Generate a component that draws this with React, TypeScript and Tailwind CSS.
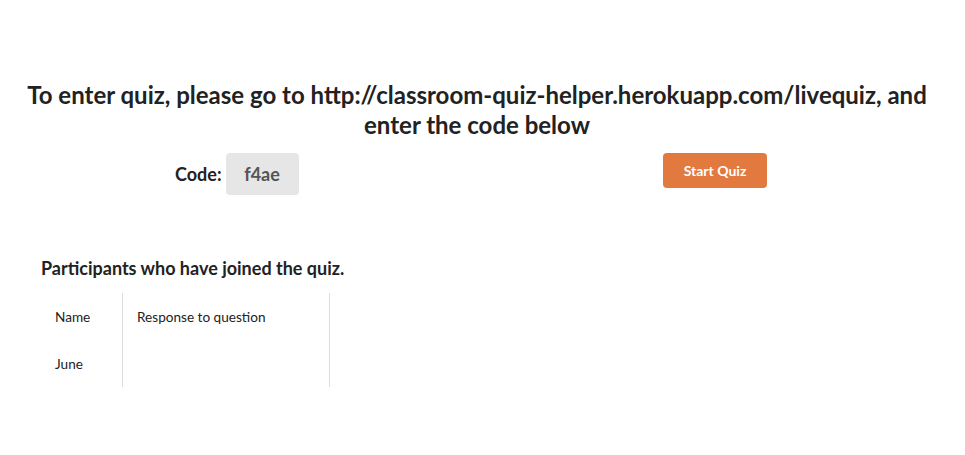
export default function App() {
  return (
    <div className="w-[965px] h-[455px] bg-white text-[#222] font-['Lato','Liberation_Sans',sans-serif]">
      <div className="pt-[80px] pl-[0px] pr-[11px]">
        <h1 className="text-center text-[24px] font-bold leading-[30px] text-[#222]">
          To enter quiz, please go to http://classroom-quiz-helper.herokuapp.com/livequiz, and
          <br />
          enter the code below
        </h1>
      </div>
      <div className="flex mt-[13px] h-[42px]">
        <div className="w-[482px] flex items-center">
          <div className="ml-[175px] flex items-center">
            <span className="text-[18px] font-bold">Code:</span>
            <span className="ml-[4px] w-[73px] h-[42px] bg-[#e6e6e6] rounded-[4px] flex items-center justify-center text-[18px] font-bold text-[#555]">
              f4ae
            </span>
          </div>
        </div>
        <div className="flex-1 self-start">
          <button className="ml-[181px] w-[104px] h-[35px] bg-[#e27a3f] rounded-[4px] text-white text-[14px] font-bold">
            Start Quiz
          </button>
        </div>
      </div>
      <div className="mt-[61px] ml-[41px]">
        <h2 className="text-[18px] font-bold leading-[24px]">Participants who have joined the quiz.</h2>
        <div className="mt-[13px] flex text-[13.6px] h-[94px]">
          <div className="w-[82px] border-r border-[#ddd] pl-[14px]">
            <div className="pt-[14px] h-[47px]">Name</div>
            <div className="pt-[14px]">June</div>
          </div>
          <div className="w-[207px] border-r border-[#ddd] pl-[14px]">
            <div className="pt-[14px]">Response to question</div>
          </div>
        </div>
      </div>
    </div>
  );
}
